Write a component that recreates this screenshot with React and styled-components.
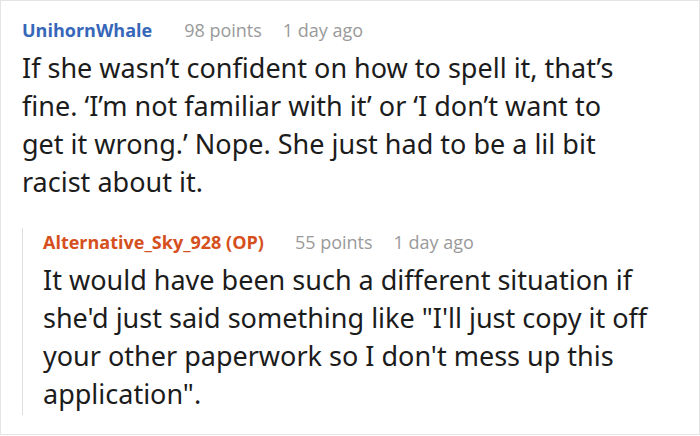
import React from 'react';
import styled, { createGlobalStyle } from 'styled-components';

const Global = createGlobalStyle`
  html, body {
    margin: 0;
    padding: 0;
    background: #ffffff;
  }
`;

const Card = styled.div`
  box-sizing: border-box;
  width: 700px;
  height: 435px;
  border: 1px solid #e4e4e4;
  padding: 15px 24px 0 21px;
  background: #fff;
`;

const Header = styled.div`
  display: flex;
  align-items: baseline;
  font-family: "Open Sans", "Noto Sans", sans-serif;
  font-size: 18px;
  line-height: 28px;
`;

const Author = styled.span`
  font-weight: 700;
  color: ${props => props.$op ? '#d5501d' : '#3767b9'};
  margin-right: ${props => props.$op ? '31px' : '32px'};
`;

const Meta = styled.span`
  color: #9a9a9a;
  margin-right: 21px;
`;

const Body = styled.p`
  margin: 5px 0 0 0;
  max-width: ${props => props.$narrow ? '624px' : 'none'};
  font-family: "Noto Sans", "Open Sans", sans-serif;
  font-size: 27px;
  line-height: 38px;
  color: #1c1c1c;
`;

const Reply = styled.div`
  margin-top: 27px;
  border-left: 1px solid #dedede;
  padding-left: 20px;
  padding-bottom: 2px;
`;

function Comment({ author, op, narrow, points, time, children }) {
  return (
    <div>
      <Header>
        <Author $op={op}>{author}</Author>
        <Meta>{points} points</Meta>
        <Meta>{time}</Meta>
      </Header>
      <Body $narrow={narrow}>{children}</Body>
    </div>
  );
}

export default function App() {
  return (
    <>
      <Global />
      <Card>
        <Comment author="UnihornWhale" narrow points={98} time="1 day ago">
          If she wasn’t confident on how to spell it, that’s fine. ‘I’m not familiar with it’ or ‘I don’t want to get it wrong.’ Nope. She just had to be a lil bit racist about it.
        </Comment>
        <Reply>
          <Comment author="Alternative_Sky_928 (OP)" op points={55} time="1 day ago">
            It would have been such a different situation if she'd just said something like "I'll just copy it off your other paperwork so I don't mess up this application".
          </Comment>
        </Reply>
      </Card>
    </>
  );
}
